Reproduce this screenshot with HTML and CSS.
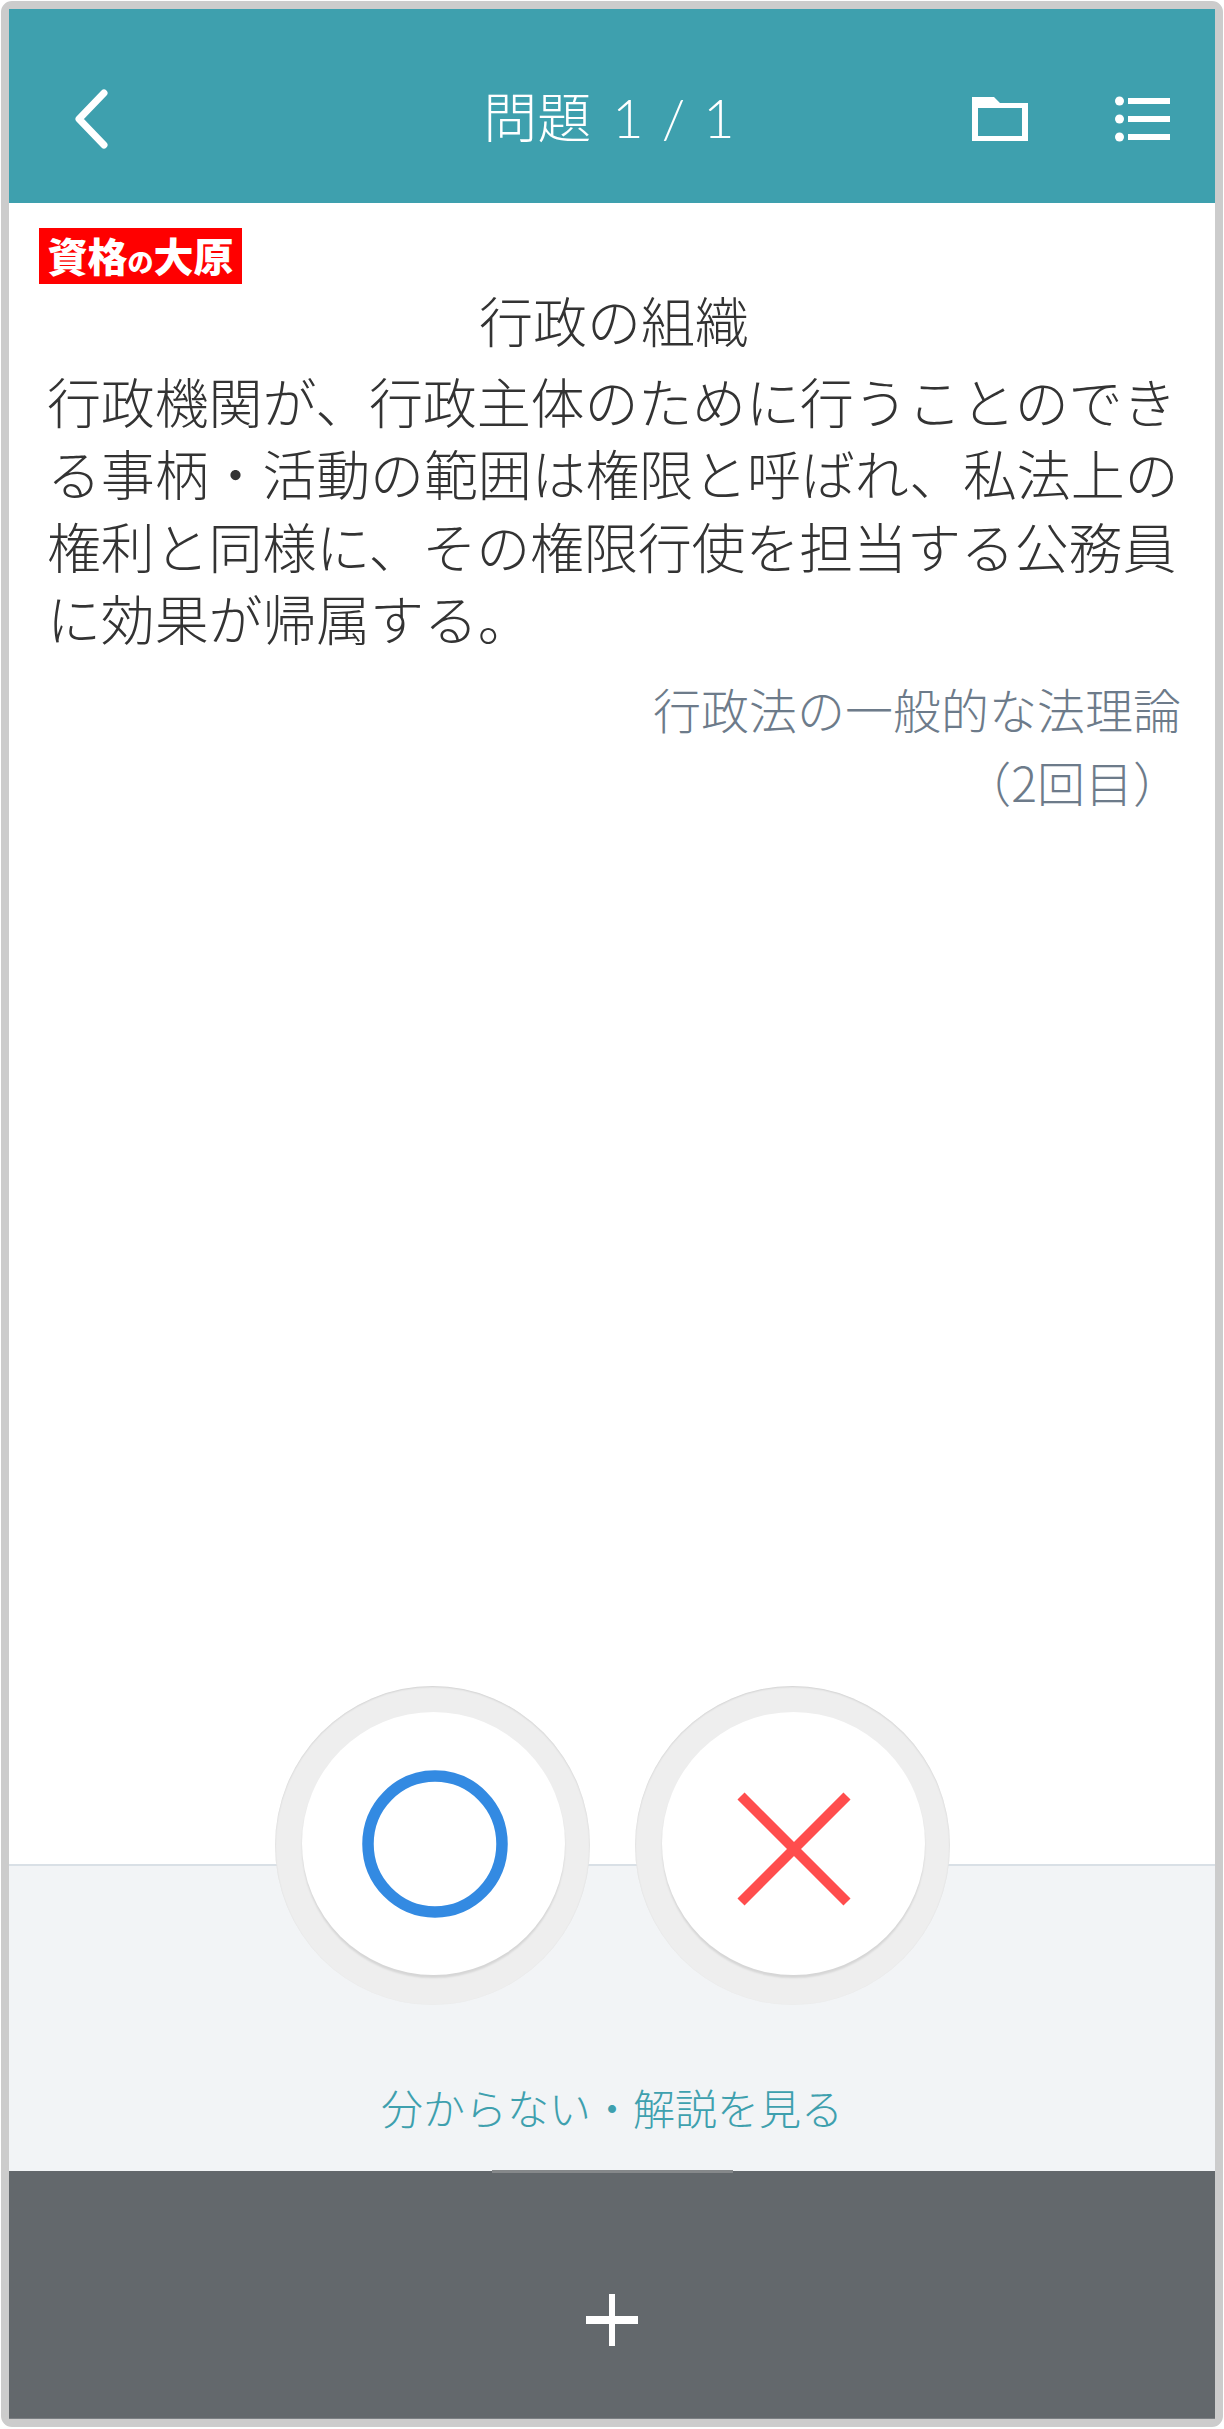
FILE: index.html
```html
<!DOCTYPE html>
<html lang="ja">
<head>
<meta charset="utf-8">
<title>問題 1 / 1</title>
<link rel="stylesheet" href="styles.css">
</head>
<body>
<div class="frame">

  <header class="topbar">
    <svg class="back" width="40" height="64" viewBox="0 0 40 64">
      <path d="M32 6 L7 32 L32 58" fill="none" stroke="#fff" stroke-width="7" stroke-linecap="round" stroke-linejoin="round"/>
    </svg>
    <div class="title">問題 <span class="count">1 / 1</span></div>
    <svg class="folder" width="56" height="44" viewBox="0 0 56 44">
      <path fill="#fff" fill-rule="evenodd" d="M0 0 H22 L28 6 H56 V44 H0 Z M6 11 V39 H50 V11 Z"/>
    </svg>
    <svg class="list" width="55" height="46" viewBox="0 0 55 46">
      <circle cx="4.5" cy="5" r="4.5" fill="#fff"/>
      <circle cx="4.5" cy="23" r="4.5" fill="#fff"/>
      <circle cx="4.5" cy="41" r="4.5" fill="#fff"/>
      <rect x="13" y="2" width="42" height="6" fill="#fff"/>
      <rect x="13" y="20" width="42" height="6" fill="#fff"/>
      <rect x="13" y="38" width="42" height="6" fill="#fff"/>
    </svg>
  </header>

  <main class="question">
    <div class="logo">資格<span class="logo-no">の</span>大原</div>
    <h1 class="subject">行政の組織</h1>
    <p class="body-text">行政機関が、行政主体のために行うことのできる事柄・活動の範囲は権限と呼ばれ、私法上の権利と同様に、その権限行使を担当する公務員に効果が帰属する。</p>
    <p class="source">行政法の一般的な法理論<br>（2回目）</p>
  </main>

  <section class="tray">
    <div class="answers">
      <div class="answer">
        <div class="answer-inner">
          <svg class="mark-ok" width="146" height="148" viewBox="0 0 146 148">
            <ellipse cx="73" cy="74" rx="67" ry="68" fill="none" stroke="#338ae2" stroke-width="11.5"/>
          </svg>
        </div>
      </div>
      <div class="answer">
        <div class="answer-inner">
          <svg class="mark-ng" width="114" height="114" viewBox="0 0 114 114">
            <path d="M4 4 L110 110 M110 4 L4 110" fill="none" stroke="#ff4d4d" stroke-width="10"/>
          </svg>
        </div>
      </div>
    </div>
    <div class="hint">分からない・解説を見る</div>
  </section>

  <footer class="bottombar">
    <span class="grip"></span>
    <svg class="plus" width="52" height="52" viewBox="0 0 52 52">
      <rect x="23" y="0" width="6" height="52" fill="#fff"/>
      <rect x="0" y="22" width="52" height="8" fill="#fff"/>
    </svg>
  </footer>

</div>
</body>
</html>
```

FILE: styles.css
```css
html, body { margin:0; padding:0; background:#fff; }
body { font-family:"Noto Sans CJK JP", "Noto Sans", sans-serif; color:#333; }

.frame { display:flex; flex-direction:column; box-sizing:border-box; height:2426px; margin:1px; border:8px solid #ccc; border-radius:11px; background:#fff; }

.topbar { display:flex; align-items:center; flex:none; height:194px; background:#3ea0ae; color:#fff; position:relative; }
.back { margin-left:63px; margin-top:26px; }
.title { position:absolute; left:0; right:6px; top:74px; text-align:center; font-size:54px; line-height:64px; font-weight:300; }
.count { font-family:"Lato", sans-serif; font-weight:300; word-spacing:3.5px; margin-left:9px; }
.folder { margin-left:auto; margin-top:26px; }
.list { margin-left:87px; margin-right:45px; margin-top:26px; }

.question { flex:1; padding:25px 30px 0 38px; }
.logo { width:203px; height:56px; margin-left:-8px; background:#f00; color:#fff; font-size:40px; line-height:54px; font-weight:900; text-align:center; white-space:nowrap; }
.logo-no { font-size:26px; }
.subject { margin:0; text-align:center; font-size:54px; line-height:72px; font-weight:300; color:#333; transform:translateX(-2px); }
.body-text { margin:9px 0 0; font-size:54px; line-height:72.3px; font-weight:300; letter-spacing:-.15px; }
.source { margin:18px 4px 0 0; text-align:right; font-size:48px; line-height:73px; font-weight:300; color:#6d7b8a; }

.tray { flex:none; height:305px; background:#f2f4f6; border-top:2px solid #d9e0e6; }
.answers { display:flex; justify-content:center; gap:45px; margin-top:-180px; }
.answer { display:flex; align-items:center; justify-content:center; width:315px; height:319px; border-radius:50%; background:#eee; box-shadow:inset 0 1px 2px rgba(0,0,0,.12); }
.answer-inner { display:flex; align-items:center; justify-content:center; width:263px; height:263px; margin:-4px 0 0 3px; border-radius:50%; background:#fff; box-shadow:0 3px 2px rgba(0,0,0,.1); }
.mark-ok { margin-left:2px; }
.mark-ng { margin:10px 0 0 1px; }
.hint { margin-top:72px; text-align:center; font-size:42px; line-height:60px; font-weight:300; color:#3ea0ae; }

.bottombar { display:flex; align-items:center; justify-content:center; flex:none; height:248px; background:#63686c; position:relative; border-bottom:1px solid #7b7f83; box-sizing:border-box; }
.grip { position:absolute; left:483px; top:-1px; width:241px; height:3px; background:#85888a; }
.plus { margin-top:50px; }
```
